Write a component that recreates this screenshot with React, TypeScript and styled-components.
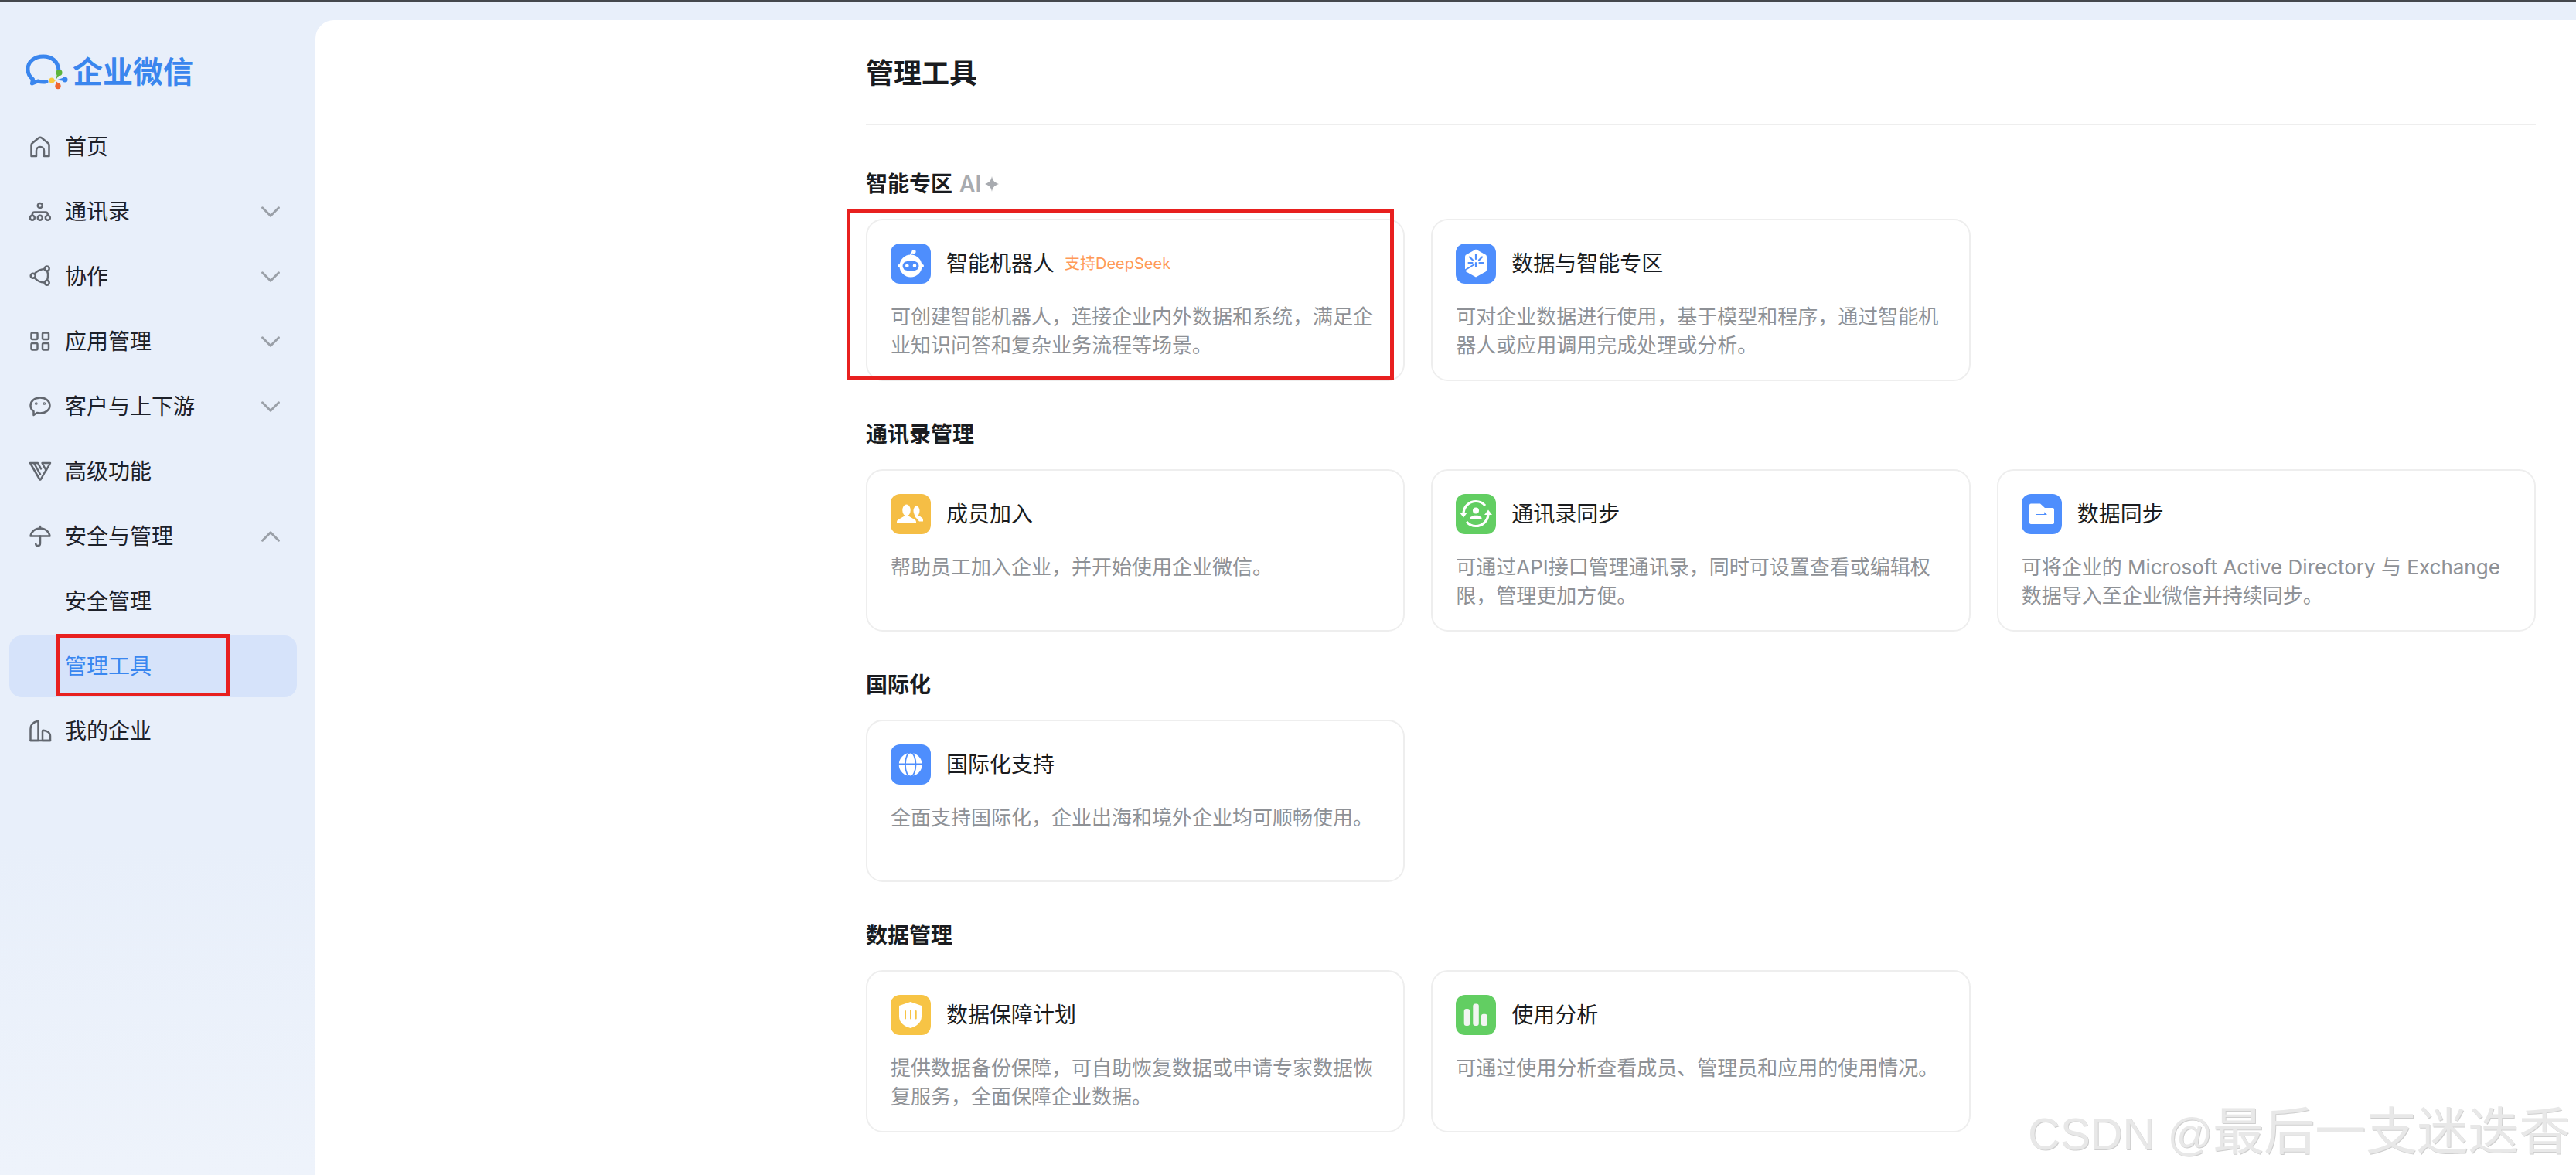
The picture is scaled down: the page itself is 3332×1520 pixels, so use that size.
import React from "react";
import styled, { createGlobalStyle } from "styled-components";
import { ChevronDown, ChevronUp } from "lucide-react";

const FONT = `Inter, "Noto Sans CJK SC", "Noto Sans", sans-serif`;

const GlobalStyle = createGlobalStyle`
  html, body {
    margin: 0;
    padding: 0;
    height: 100%;
    overflow: hidden;
    background: #e8effa;
    font-family: ${FONT};
  }
  * {
    box-sizing: border-box;
  }
`;

const StrokeSvg = styled.svg.attrs({ viewBox: "0 0 30 30", fill: "none" })`
  width: 30px;
  height: 30px;
  flex-shrink: 0;
  stroke: #62676f;
  stroke-width: 2.5;
  stroke-linejoin: round;
  stroke-linecap: round;
`;

const HomeIcon = () => (
  <StrokeSvg>
    <path d="M3.5 27V12.5c0-1 .4-1.7 1.2-2.3L13 3.6c1.3-1 2.7-1 4 0l8.3 6.6c.8.6 1.2 1.3 1.2 2.3V27H20v-7c0-3-2-5-5-5s-5 2-5 5v7H3.5Z" />
  </StrokeSvg>
);

const ContactsIcon = () => (
  <StrokeSvg>
    <circle cx="14.8" cy="7" r="3" />
    <circle cx="4.8" cy="22.8" r="3" />
    <circle cx="14.8" cy="22.8" r="3" />
    <circle cx="24.8" cy="22.8" r="3" />
    <path d="M4.8 19v-.5c0-2 1.2-3 3-3h14c1.8 0 3 1 3 3v.5" />
  </StrokeSvg>
);

const CollabIcon = () => (
  <StrokeSvg>
    <circle cx="23.7" cy="4.6" r="3" />
    <circle cx="5.7" cy="13.7" r="3" />
    <circle cx="23.7" cy="22.7" r="3" />
    <path d="M7.6 11.2C11 7.2 15 5.4 20.6 5M7.6 16.2c3.4 4 7.4 6 13 6.4M24 7.8c1.5 3.6 1.5 7.2 0 11.8" />
  </StrokeSvg>
);

const AppsIcon = () => (
  <StrokeSvg>
    <rect x="3.5" y="3.5" width="8" height="8.5" rx="1.5" />
    <rect x="18" y="3.5" width="8" height="8.5" rx="1.5" />
    <rect x="3.5" y="17" width="8" height="8.5" rx="1.5" />
    <rect x="18" y="17" width="8" height="8.5" rx="1.5" />
  </StrokeSvg>
);

const ChatIcon = () => (
  <StrokeSvg>
    <path d="M15 3.5c7.5 0 12.5 4.5 12.5 10s-5 10-12.5 10c-1.5 0-3-.2-4.2-.5L6.5 26v-5c-3-1.8-4-4.5-4-7.5 0-5.5 5-10 12.5-10Z" />
    <circle cx="9.8" cy="11" r="0.6" />
    <circle cx="20.3" cy="11" r="0.6" />
  </StrokeSvg>
);

const AdvancedIcon = () => (
  <StrokeSvg>
    <path d="M2 4h10l4 7.5M2 4l12.5 21.5h1L22 14" />
    <path d="M7.5 5l7.5 13.5" />
    <path d="M17.5 4H28l-5.3 9.5L17.5 4Z" />
  </StrokeSvg>
);

const SecurityIcon = () => (
  <StrokeSvg>
    <path d="M2.5 14.5C3.5 8.5 8.5 4.5 15 4.5s11.500 4 12.500 10h-25Z" />
    <path d="M15 2v2.500M15 14.500V24c0 2-1 3-3 3s-2.800-1-2.800-2.800" />
  </StrokeSvg>
);

const CompanyIcon = () => (
  <StrokeSvg>
    <path d="M2.500 27V12c0-4.500 3.500-8.500 9-10.200 .7 0 1 .5 1 1.200v24H2.500Z" />
    <path d="M18 27V14.500c0-.5.300-.7.800-.7 5 .5 9.200 3 9.200 7.200v6H18Z" />
    <path d="M2.500 27H28" />
  </StrokeSvg>
);

const LogoSvg = styled.svg.attrs({ viewBox: "0 0 60 52", fill: "none" })`
  width: 60px;
  height: 52px;
  flex-shrink: 0;
`;

const Logo = () => (
  <LogoSvg>
    <path
      d="M44 24C43 12 34.500 6 24 6 12.500 6 4 13 4 22.500c0 5.500 2.500 10 6.500 13l-1 5.500 7.500-3c3.500 1 7.500 1.300 11 .5"
      stroke="#3a86ee"
      strokeWidth="5"
      strokeLinecap="round"
      strokeLinejoin="round"
    />
    <path d="M40 36.500L43 24.500l3.500 3Z" fill="#5db43c" />
    <circle cx="44.500" cy="27" r="4" fill="#5db43c" />
    <path d="M41 36.500L52 33l.500 5Z" fill="#3a86ee" />
    <circle cx="52" cy="36" r="3.500" fill="#3a86ee" />
    <path d="M40 37.500l-4 2.500-1-5Z" fill="#f7c93e" />
    <circle cx="35" cy="37" r="3.500" fill="#f7c93e" />
    <path d="M40 37.500l5.500 5-5 2.500Z" fill="#f0662e" />
    <circle cx="43" cy="44.500" r="3.700" fill="#f0662e" />
  </LogoSvg>
);

const GlyphSvg = styled.svg.attrs({ viewBox: "0 0 52 52" })`
  display: block;
  width: 52px;
  height: 52px;
`;

const RobotGlyph = () => (
  <GlyphSvg>
    <path d="M26 15c0-2 1.500-3.500 3.500-4.500" stroke="#fff" strokeWidth="1.800" fill="none" />
    <circle cx="30" cy="10.500" r="2.600" fill="#fff" />
    <circle cx="26" cy="29" r="14.500" fill="#fff" />
    <circle cx="11" cy="29" r="2" fill="#fff" />
    <circle cx="41" cy="29" r="2" fill="#fff" />
    <rect x="15.500" y="23" width="21" height="12" rx="6" fill="#4e8efd" />
    <circle cx="21.300" cy="28.800" r="2.300" fill="#fff" />
    <circle cx="31" cy="28.800" r="2.300" fill="#fff" />
  </GlyphSvg>
);

const DataGlyph = () => (
  <GlyphSvg>
    <path d="M26 7.500l12.500 7q1.500.9 1.500 2.500v17q0 1.600-1.500 2.500l-12.500 7-12.500-7q-1.500-.9-1.500-2.500V17q0-1.600 1.500-2.500Z" fill="#fff" />
    <path d="M11 35l13-8" stroke="#4e8efd" strokeWidth="2" />
    <path d="M26 14v6M26 25v4.500M18 17.500l4 4M34 17.500l-4 4M16.500 25h5M30.500 25h5" stroke="#4e8efd" strokeWidth="2.200" strokeLinecap="round" />
  </GlyphSvg>
);

const MembersGlyph = () => (
  <GlyphSvg>
    <ellipse cx="33.500" cy="22" rx="4" ry="6.500" fill="#fff" />
    <path d="M30 28h7l4.300 3.500c.5.500.7 1.200.7 2.500v1.500H37l-3-3.500-4-4Z" fill="#fff" />
    <ellipse cx="20.500" cy="21" rx="6" ry="8.300" fill="#fff" stroke="#f5be45" strokeWidth="1.500" />
    <path d="M8 38v-1.500c0-1.500.6-2.500 1.800-3.200l7.200-4.300c2.300-1.400 4.700-1.400 7 0l7.200 4.300c1.200.7 1.800 1.700 1.800 3.200V38H8Z" fill="#fff" />
  </GlyphSvg>
);

const SyncGlyph = () => (
  <GlyphSvg>
    <circle cx="26" cy="21.500" r="4" fill="#fff" />
    <path d="M18.500 33v-1.500c0-1 .5-1.600 1.300-2l3.700-1.700h5l3.700 1.700c.8.400 1.300 1 1.300 2V33h-15Z" fill="#fff" />
    <path d="M10 24C11 15.500 18 9.500 26 9.500c5 0 9 2 12 5.500" stroke="#fff" strokeWidth="3.200" fill="none" />
    <path d="M42 27C41 35.500 34 41.500 26 41.500c-5 0-9-2-12-5.500" stroke="#fff" strokeWidth="3.200" fill="none" />
    <path d="M5 24h10l-5 6.500Z" fill="#fff" />
    <path d="M47 27H37l5-6.500Z" fill="#fff" />
  </GlyphSvg>
);

const FolderGlyph = () => (
  <GlyphSvg>
    <path d="M12 12.500h12l6 5.500h10q2 0 2 2v17q0 2-2 2H12q-2 0-2-2V14.500q0-2 2-2Z" fill="#fff" />
    <path d="M18 27h15l-3.800-3.800V26H18Z" fill="#4e8efd" />
  </GlyphSvg>
);

const GlobeGlyph = () => (
  <GlyphSvg>
    <circle cx="25.700" cy="26" r="15" fill="#fff" />
    <ellipse cx="25.700" cy="26" rx="6.800" ry="15.500" fill="none" stroke="#4e8efd" strokeWidth="1.800" />
    <path d="M9 25.500h34" stroke="#4e8efd" strokeWidth="2" />
  </GlyphSvg>
);

const ShieldGlyph = () => (
  <GlyphSvg>
    <path d="M25.700 9L40 14v14c0 8-7 13-14.300 15C18 41 11 36 11 28V14Z" fill="#fff" />
    <path d="M19 21v9.500M26 20v10.500M32.700 21v9.500" stroke="#f7c445" strokeWidth="2" strokeLinecap="round" />
  </GlyphSvg>
);

const BarsGlyph = () => (
  <GlyphSvg>
    <rect x="10.700" y="18" width="7.500" height="22" rx="3" fill="#f2f5f2" />
    <rect x="22.300" y="11.500" width="7.500" height="28.500" rx="3" fill="#f2f5f2" />
    <rect x="33" y="24.700" width="7.500" height="15.300" rx="2.500" fill="#f2f5f2" />
  </GlyphSvg>
);

const SparkSvg = styled.svg.attrs({ viewBox: "0 0 18 20" })`
  width: 18px;
  height: 20px;
  margin-left: 5px;
  fill: #a8abb0;
`;

const navItems = [
  { label: "首页", icon: <HomeIcon /> },
  { label: "通讯录", icon: <ContactsIcon />, arrow: "down" },
  { label: "协作", icon: <CollabIcon />, arrow: "down" },
  { label: "应用管理", icon: <AppsIcon />, arrow: "down" },
  { label: "客户与上下游", icon: <ChatIcon />, arrow: "down" },
  { label: "高级功能", icon: <AdvancedIcon /> },
  { label: "安全与管理", icon: <SecurityIcon />, arrow: "up" },
  { label: "安全管理", sub: true },
  { label: "管理工具", sub: true, active: true },
  { label: "我的企业", icon: <CompanyIcon /> },
];

const sections = [
  {
    title: "智能专区",
    ai: true,
    cards: [
      {
        title: "智能机器人",
        tag: "支持DeepSeek",
        marked: true,
        color: "#4e8efd",
        icon: <RobotGlyph />,
        text: "可创建智能机器人，连接企业内外数据和系统，满足企业知识问答和复杂业务流程等场景。",
      },
      {
        title: "数据与智能专区",
        color: "#4e8efd",
        icon: <DataGlyph />,
        text: "可对企业数据进行使用，基于模型和程序，通过智能机器人或应用调用完成处理或分析。",
      },
    ],
  },
  {
    title: "通讯录管理",
    cards: [
      {
        title: "成员加入",
        color: "#f5be45",
        icon: <MembersGlyph />,
        text: "帮助员工加入企业，并开始使用企业微信。",
      },
      {
        title: "通讯录同步",
        color: "#62ce62",
        icon: <SyncGlyph />,
        text: "可通过API接口管理通讯录，同时可设置查看或编辑权限，管理更加方便。",
      },
      {
        title: "数据同步",
        color: "#4e8efd",
        icon: <FolderGlyph />,
        text: "可将企业的 Microsoft Active Directory 与 Exchange 数据导入至企业微信并持续同步。",
      },
    ],
  },
  {
    title: "国际化",
    cards: [
      {
        title: "国际化支持",
        color: "#4e8efd",
        icon: <GlobeGlyph />,
        text: "全面支持国际化，企业出海和境外企业均可顺畅使用。",
      },
    ],
  },
  {
    title: "数据管理",
    cards: [
      {
        title: "数据保障计划",
        color: "#f7c445",
        icon: <ShieldGlyph />,
        text: "提供数据备份保障，可自助恢复数据或申请专家数据恢复服务，全面保障企业数据。",
      },
      {
        title: "使用分析",
        color: "#62ce62",
        icon: <BarsGlyph />,
        text: "可通过使用分析查看成员、管理员和应用的使用情况。",
      },
    ],
  },
];

export default function App() {
  return (
    <>
      <GlobalStyle />
      <Page>
        <TopLine />
        <Body>
          <Sidebar>
            <LogoRow>
              <Logo />
              <LogoText>企业微信</LogoText>
            </LogoRow>
            <Nav>
              {navItems.map((item) => (
                <NavRow key={item.label} $active={item.active}>
                  {item.icon}
                  <NavLabel $sub={item.sub} $active={item.active}>{item.label}</NavLabel>
                  {item.arrow === "down" && <ChevronDown size={42} strokeWidth={1.7} color="#9aa0a8" />}
                  {item.arrow === "up" && <ChevronUp size={42} strokeWidth={1.7} color="#9aa0a8" />}
                  {item.active && <SideMark />}
                </NavRow>
              ))}
            </Nav>
          </Sidebar>
          <Main>
            <PageTitle>管理工具</PageTitle>
            <Divider />
            {sections.map((section) => (
              <Section key={section.title}>
                <SectionHead>
                  {section.title}
                  {section.ai && (
                    <>
                      <AiMark>AI</AiMark>
                      <SparkSvg>
                        <path d="M9 0c1 5.500 3 8 9 10-6 2-8 4.500-9 10-1-5.500-3-8-9-10 6-2 8-4.500 9-10Z" />
                      </SparkSvg>
                    </>
                  )}
                </SectionHead>
                <CardGrid>
                  {section.cards.map((card) => (
                    <Card key={card.title}>
                      <CardHead>
                        <IconTile $color={card.color}>{card.icon}</IconTile>
                        <CardTitle>{card.title}</CardTitle>
                        {card.tag && <CardTag>{card.tag}</CardTag>}
                      </CardHead>
                      <CardText>{card.text}</CardText>
                      {card.marked && <CardMark />}
                    </Card>
                  ))}
                </CardGrid>
              </Section>
            ))}
          </Main>
        </Body>
        <Watermark>
          <WatermarkLatin>CSDN @</WatermarkLatin>最后一支迷迭香
        </Watermark>
      </Page>
    </>
  );
}

const Page = styled.div`
  position: relative;
  width: 3332px;
  height: 1520px;
  overflow: hidden;
  background: #e8effa;
`;

const TopLine = styled.div`
  height: 2px;
  background: #44474c;
`;

const Body = styled.div`
  display: flex;
  height: 1518px;
`;

const Sidebar = styled.aside`
  width: 408px;
  flex-shrink: 0;
  padding-top: 60px;
  background: linear-gradient(#e8effa 72%, #eef3fb 100%);
`;

const LogoRow = styled.div`
  display: flex;
  align-items: center;
  gap: 2px;
  height: 62px;
  padding-left: 32px;
`;

const LogoText = styled.div`
  font-size: 39px;
  font-weight: 700;
  line-height: 62px;
  color: #3a86ee;
`;

const Nav = styled.nav`
  display: flex;
  flex-direction: column;
  gap: 4px;
  width: 372px;
  margin: 26px 0 0 12px;
`;

const NavRow = styled.div<{ $active?: boolean }>`
  position: relative;
  display: flex;
  align-items: center;
  gap: 17px;
  height: 80px;
  padding: 0 13px 0 25px;
  border-radius: 16px;
  background: ${({ $active }) => ($active ? "#d6e3fa" : "transparent")};
`;

const NavLabel = styled.span<{ $sub?: boolean; $active?: boolean }>`
  flex: 1;
  margin-left: ${({ $sub }) => ($sub ? "47px" : "0")};
  font-size: 28px;
  line-height: 40px;
  color: ${({ $active }) => ($active ? "#3a87f0" : "#1d2129")};
`;

const SideMark = styled.div`
  position: absolute;
  left: 60px;
  right: 87px;
  top: -2px;
  bottom: 1px;
  border: 5px solid #e8201f;
`;

const Main = styled.main`
  flex: 1;
  margin-top: 24px;
  padding: 44px 52px 0 712px;
  border-top-left-radius: 24px;
  background: #fff;
`;

const PageTitle = styled.h1`
  margin: 0;
  font-size: 36px;
  font-weight: 600;
  line-height: 50px;
  color: #1a1c20;
`;

const Divider = styled.div`
  height: 2px;
  margin: 40px 0 56px;
  background: #eeeeee;
`;

const Section = styled.section`
  margin-top: 49px;
`;

const SectionHead = styled.h2`
  display: flex;
  align-items: center;
  margin: 0 0 25px;
  font-size: 28px;
  font-weight: 600;
  line-height: 40px;
  color: #1a1c20;
`;

const AiMark = styled.span`
  margin-left: 9px;
  font-weight: 600;
  color: #a8abb0;
`;

const CardGrid = styled.div`
  display: grid;
  grid-template-columns: repeat(3, 1fr);
  gap: 34px;
`;

const Card = styled.div`
  position: relative;
  height: 210px;
  padding: 30px;
  border: 2px solid #eeeeee;
  border-radius: 22px;
  background: #fff;
`;

const CardMark = styled.div`
  position: absolute;
  left: -27px;
  right: 12px;
  top: -15px;
  bottom: 0;
  border: 5px solid #e8201f;
`;

const CardHead = styled.div`
  display: flex;
  align-items: center;
  height: 52px;
  margin-bottom: 24px;
`;

const IconTile = styled.div<{ $color: string }>`
  flex-shrink: 0;
  width: 52px;
  height: 52px;
  margin-right: 20px;
  border-radius: 12px;
  overflow: hidden;
  background: ${({ $color }) => $color};
`;

const CardTitle = styled.div`
  font-size: 28px;
  line-height: 40px;
  color: #1a1c20;
`;

const CardTag = styled.div`
  margin-left: 13px;
  font-size: 20px;
  line-height: 28px;
  color: #ff9a57;
`;

const CardText = styled.p`
  margin: 0;
  font-size: 26px;
  line-height: 37px;
  color: #8e9196;
`;

const Watermark = styled.div`
  position: absolute;
  left: 2623px;
  top: 1425px;
  display: flex;
  align-items: baseline;
  white-space: nowrap;
  font-size: 66px;
  line-height: 76px;
  color: #e8e8e8;
  text-shadow: 1px 1px 0 #cfcfcf;
`;

const WatermarkLatin = styled.span`
  font-family: "Liberation Sans", sans-serif;
  font-size: 58px;
  white-space: pre;
`;
